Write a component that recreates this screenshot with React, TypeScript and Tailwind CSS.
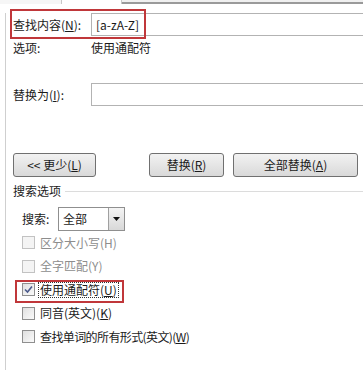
import React from "react";

const font = { fontFamily: '"Noto Sans CJK SC", "Noto Sans", sans-serif' };

function Btn({ children, className }: { children: React.ReactNode; className: string }) {
  return (
    <div
      className={`h-[24px] flex items-center justify-center rounded-[3px] border border-[#707070] bg-gradient-to-b from-[#f2f2f2] to-[#d9d9d9] text-[12px] leading-none text-[#1b1b1b] ${className}`}
    >
      {children}
    </div>
  );
}

function Check({ label, checked, disabled, focus, tight }: { label: React.ReactNode; checked?: boolean; disabled?: boolean; focus?: boolean; tight?: boolean }) {
  return (
    <div className="h-[23.5px] flex items-center pl-[9px]">
      <div
        className={`w-[13px] h-[13px] border flex items-center justify-center ${
          disabled ? "border-[#c2c2c2] bg-[#f4f4f4]" : "border-[#8f8f8f] bg-gradient-to-br from-[#e0e0e0] to-[#fafafa]"
        }`}
      >
        {checked && (
          <svg width="9" height="9" viewBox="0 0 9 9">
            <path d="M1 4.5 L3.5 7 L8 1.5" fill="none" stroke="#4a5a8c" strokeWidth="1.6" />
          </svg>
        )}
      </div>
      <span
        className={`ml-[4px] text-[12px] leading-[14px] px-[1px] ${tight ? "tracking-[-0.6px]" : ""} ${
          disabled ? "text-[#8d8d8d]" : "text-[#1b1b1b]"
        } ${focus ? "outline outline-1 outline-dotted outline-[#333]" : ""}`}
      >
        {label}
      </span>
    </div>
  );
}

export default function App() {
  return (
    <div className="w-[363px] h-[370px] bg-white relative overflow-hidden" style={font}>
      {/* tab strip remnants */}
      <div className="h-[4px] flex">
        <div className="w-[62px] border-r border-[#c8c8c8] bg-[#f6f6f6]" />
        <div className="w-[60px] border-r border-[#c8c8c8] bg-white" />
        <div className="flex-1 border-b-2 border-[#9a9a9a] bg-[#f0f0f0]" />
      </div>

      <div className="ml-[5px] border-l border-[#cfcfcf] pl-[7px] h-[366px]">
        {/* find */}
        <div className="mt-[9px] h-[23px] flex items-center">
          <div className="w-[78px] text-[12px] text-[#1b1b1b] leading-none">
            查找内容(<u>N</u>):
          </div>
          <div className="flex-1 -mr-[2px] h-[23px] border border-r-0 border-[#b3b3b3] flex items-center pl-[4px] text-[12px] text-[#1b1b1b]">
            [a-zA-Z]
          </div>
        </div>
        <div className="mt-[4px] h-[16px] flex items-center text-[12px] text-[#1b1b1b]">
          <div className="w-[78px]">选项:</div>
          <div>使用通配符</div>
        </div>

        {/* replace */}
        <div className="mt-[27px] h-[23px] flex items-center">
          <div className="w-[78px] text-[12px] text-[#1b1b1b] leading-none">
            替换为(<u>I</u>):
          </div>
          <div className="flex-1 -mr-[2px] h-[23px] border border-r-0 border-[#b3b3b3]" />
        </div>

        {/* buttons */}
        <div className="mt-[47px] flex">
          <Btn className="w-[83px]">
            &lt;&lt; 更少(<u>L</u>)
          </Btn>
          <Btn className="w-[75px] ml-[53px]">
            替换(<u>R</u>)
          </Btn>
          <Btn className="w-[125px] ml-[9px]">
            全部替换(<u>A</u>)
          </Btn>
        </div>

        {/* search options */}
        <div className="mt-[6px] h-[16px] flex items-center">
          <span className="text-[12px] text-[#1b1b1b]">搜索选项</span>
          <div className="flex-1 ml-[4px] border-t border-[#dcdcdc]" />
        </div>

        <div className="mt-[8px] h-[24px] flex items-center pl-[9px]">
          <span className="w-[36px] text-[12px] text-[#1b1b1b]">搜索:</span>
          <div className="w-[67px] h-[24px] border border-[#8f8f8f] flex items-center bg-white">
            <span className="pl-[4px] flex-1 text-[12px] text-[#1b1b1b]">全部</span>
            <div className="w-[16px] h-[22px] border-l border-[#a0a0a0] bg-gradient-to-b from-[#f4f4f4] to-[#d8d8d8] flex items-center justify-center">
              <svg width="7" height="4" viewBox="0 0 7 4">
                <path d="M0 0 H7 L3.5 4 Z" fill="#111" />
              </svg>
            </div>
          </div>
        </div>

        <Check label={<>区分大小写(H)</>} disabled />
        <Check label={<>全字匹配(Y)</>} disabled />
        <Check label={<>使用通配符(<u>U</u>)</>} checked focus />
        <Check label={<>同音(英文)(<u>K</u>)</>} />
        <Check label={<>查找单词的所有形式(英文)(<u>W</u>)</>} tight />
      </div>

      {/* annotation boxes */}
      <div className="absolute left-[10px] top-[9px] w-[136px] h-[30px] border-2 border-[#c0373a]" />
      <div className="absolute left-[15px] top-[280px] w-[109px] h-[23px] border-2 border-[#c0373a]" />
    </div>
  );
}
